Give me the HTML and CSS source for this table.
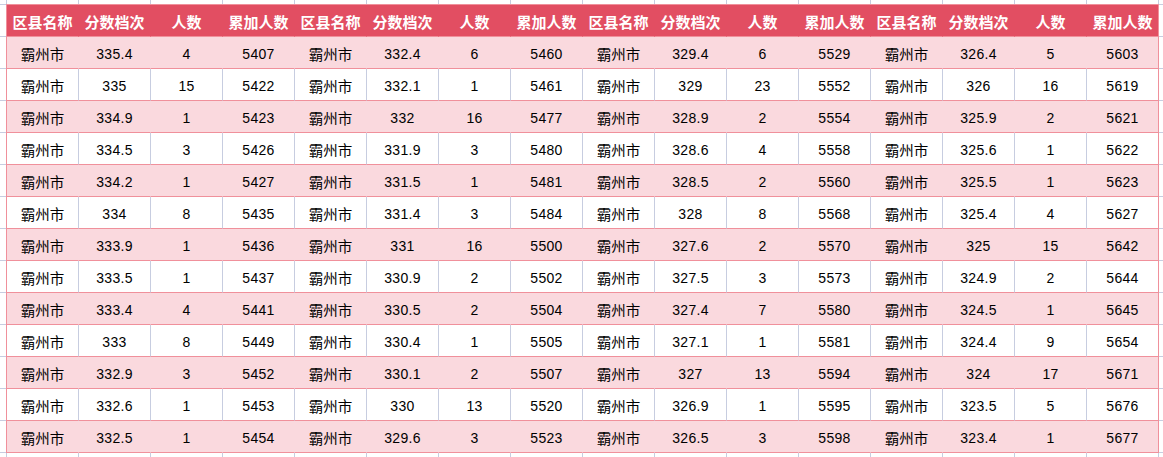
FILE: index.html
```html
<!DOCTYPE html>
<html lang="zh">
<head>
<meta charset="utf-8">
<title>霸州市 分数档次</title>
<link rel="stylesheet" href="styles.css">
</head>
<body>
<div class="sheet">
<table class="grid">
<thead>
<tr><th>区县名称</th><th>分数档次</th><th>人数</th><th>累加人数</th><th>区县名称</th><th>分数档次</th><th>人数</th><th>累加人数</th><th>区县名称</th><th>分数档次</th><th>人数</th><th>累加人数</th><th>区县名称</th><th>分数档次</th><th>人数</th><th>累加人数</th></tr>
</thead>
<tbody>
<tr class="pink"><td>霸州市</td><td>335.4</td><td>4</td><td>5407</td><td>霸州市</td><td>332.4</td><td>6</td><td>5460</td><td>霸州市</td><td>329.4</td><td>6</td><td>5529</td><td>霸州市</td><td>326.4</td><td>5</td><td>5603</td></tr>
<tr><td>霸州市</td><td>335</td><td>15</td><td>5422</td><td>霸州市</td><td>332.1</td><td>1</td><td>5461</td><td>霸州市</td><td>329</td><td>23</td><td>5552</td><td>霸州市</td><td>326</td><td>16</td><td>5619</td></tr>
<tr class="pink"><td>霸州市</td><td>334.9</td><td>1</td><td>5423</td><td>霸州市</td><td>332</td><td>16</td><td>5477</td><td>霸州市</td><td>328.9</td><td>2</td><td>5554</td><td>霸州市</td><td>325.9</td><td>2</td><td>5621</td></tr>
<tr><td>霸州市</td><td>334.5</td><td>3</td><td>5426</td><td>霸州市</td><td>331.9</td><td>3</td><td>5480</td><td>霸州市</td><td>328.6</td><td>4</td><td>5558</td><td>霸州市</td><td>325.6</td><td>1</td><td>5622</td></tr>
<tr class="pink"><td>霸州市</td><td>334.2</td><td>1</td><td>5427</td><td>霸州市</td><td>331.5</td><td>1</td><td>5481</td><td>霸州市</td><td>328.5</td><td>2</td><td>5560</td><td>霸州市</td><td>325.5</td><td>1</td><td>5623</td></tr>
<tr><td>霸州市</td><td>334</td><td>8</td><td>5435</td><td>霸州市</td><td>331.4</td><td>3</td><td>5484</td><td>霸州市</td><td>328</td><td>8</td><td>5568</td><td>霸州市</td><td>325.4</td><td>4</td><td>5627</td></tr>
<tr class="pink"><td>霸州市</td><td>333.9</td><td>1</td><td>5436</td><td>霸州市</td><td>331</td><td>16</td><td>5500</td><td>霸州市</td><td>327.6</td><td>2</td><td>5570</td><td>霸州市</td><td>325</td><td>15</td><td>5642</td></tr>
<tr><td>霸州市</td><td>333.5</td><td>1</td><td>5437</td><td>霸州市</td><td>330.9</td><td>2</td><td>5502</td><td>霸州市</td><td>327.5</td><td>3</td><td>5573</td><td>霸州市</td><td>324.9</td><td>2</td><td>5644</td></tr>
<tr class="pink"><td>霸州市</td><td>333.4</td><td>4</td><td>5441</td><td>霸州市</td><td>330.5</td><td>2</td><td>5504</td><td>霸州市</td><td>327.4</td><td>7</td><td>5580</td><td>霸州市</td><td>324.5</td><td>1</td><td>5645</td></tr>
<tr><td>霸州市</td><td>333</td><td>8</td><td>5449</td><td>霸州市</td><td>330.4</td><td>1</td><td>5505</td><td>霸州市</td><td>327.1</td><td>1</td><td>5581</td><td>霸州市</td><td>324.4</td><td>9</td><td>5654</td></tr>
<tr class="pink"><td>霸州市</td><td>332.9</td><td>3</td><td>5452</td><td>霸州市</td><td>330.1</td><td>2</td><td>5507</td><td>霸州市</td><td>327</td><td>13</td><td>5594</td><td>霸州市</td><td>324</td><td>17</td><td>5671</td></tr>
<tr><td>霸州市</td><td>332.6</td><td>1</td><td>5453</td><td>霸州市</td><td>330</td><td>13</td><td>5520</td><td>霸州市</td><td>326.9</td><td>1</td><td>5595</td><td>霸州市</td><td>323.5</td><td>5</td><td>5676</td></tr>
<tr class="pink"><td>霸州市</td><td>332.5</td><td>1</td><td>5454</td><td>霸州市</td><td>329.6</td><td>3</td><td>5523</td><td>霸州市</td><td>326.5</td><td>3</td><td>5598</td><td>霸州市</td><td>323.4</td><td>1</td><td>5677</td></tr>
</tbody>
</table>
</div>
</body>
</html>
```
FILE: styles.css
```css
html, body {
  margin: 0;
  padding: 0;
}
body {
  width: 1163px;
  height: 457px;
  overflow: hidden;
  background-color: #ffffff;
  background-image:
    linear-gradient(to right, #c7cde0 1px, transparent 1px),
    linear-gradient(to bottom, #c7cde0 1px, transparent 1px);
  background-size: 72px 100%, 100% 32px;
  background-position: 6px 0, 0 4px;
  font-family: "Noto Sans CJK SC", "Noto Sans", sans-serif;
  color: #000;
}
.sheet {
  padding: 4px 0 0 6px;
}
.grid {
  border-collapse: separate;
  border-spacing: 0;
  table-layout: fixed;
  width: 1153px;
  border-top: 1px solid #f0909b;
  border-left: 1px solid #f0909b;
}
.grid th,
.grid td {
  box-sizing: border-box;
  width: 72px;
  height: 32px;
  padding: 2px 0 0 0;
  text-align: center;
  vertical-align: middle;
  white-space: nowrap;
  overflow: hidden;
  border-bottom: 1px solid #f0909b;
  border-right: 1px solid #c7cde0;
  background: #ffffff;
  line-height: 20px;
}
.grid th {
  background: #e24e62;
  color: #ffffff;
  font-weight: bold;
  font-size: 15px;
  border-right-color: #e24e62;
}
.grid td {
  font-family: "Liberation Sans", "Noto Sans CJK SC", sans-serif;
  font-size: 14px;
  letter-spacing: 0.3px;
}
.grid td:nth-child(4n+1) {
  font-family: "Noto Sans CJK SC", sans-serif;
  font-size: 14.5px;
  letter-spacing: 0;
}
.grid tr.pink td {
  background: #fad9de;
  border-right-color: #fad9de;
}
.grid th:last-child,
.grid td:last-child,
.grid tr.pink td:last-child {
  border-right-color: #f0909b;
}
```
